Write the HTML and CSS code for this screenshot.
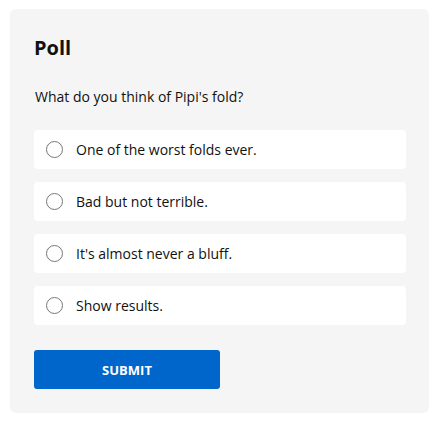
FILE: index.html
```html
<!DOCTYPE html>
<html>
<head>
<meta charset="utf-8">
<link rel="stylesheet" href="styles.css">
</head>
<body>
<div class="card">
  <h2 class="title">Poll</h2>
  <p class="question">What do you think of Pipi's fold?</p>
  <div class="options">
    <label class="option"><span class="radio"></span><span class="label">One of the worst folds ever.</span></label>
    <label class="option"><span class="radio"></span><span class="label">Bad but not terrible.</span></label>
    <label class="option"><span class="radio"></span><span class="label">It's almost never a bluff.</span></label>
    <label class="option"><span class="radio"></span><span class="label">Show results.</span></label>
  </div>
  <button class="submit">SUBMIT</button>
</div>
</body>
</html>
```
FILE: styles.css
```css
html, body { margin: 0; padding: 0; background: #ffffff; }
body { padding: 9px 10px; font-family: "Open Sans", "Noto Sans", sans-serif; color: #111; }
.card {
  width: 419px;
  height: 404px;
  box-sizing: border-box;
  background: #f5f5f5;
  border-radius: 6px;
  padding: 25px 23px 0 24px;
}
.title {
  margin: 0;
  font-size: 20px;
  font-weight: 700;
  line-height: 27px;
  color: #111;
}
.question {
  margin: 26px 0 0 1px;
  font-size: 14px;
  line-height: 19px;
  color: #111;
}
.options {
  margin-top: 24px;
  display: flex;
  flex-direction: column;
  gap: 13px;
}
.option {
  display: flex;
  align-items: center;
  height: 39px;
  background: #fff;
  border-radius: 4px;
  padding-left: 12px;
}
.radio {
  width: 15px;
  height: 15px;
  border: 1.3px solid #767676;
  border-radius: 50%;
  background: #fff;
  flex: none;
}
.label {
  margin-left: 13px;
  font-size: 14px;
  color: #111;
}
.submit {
  margin-top: 25px;
  width: 186px;
  height: 39px;
  border: 0;
  border-radius: 3px;
  background: #0066cc;
  color: #fff;
  font-family: "Open Sans", "Noto Sans", sans-serif;
  font-weight: 700;
  font-size: 13px;
  display: block;
}
```
